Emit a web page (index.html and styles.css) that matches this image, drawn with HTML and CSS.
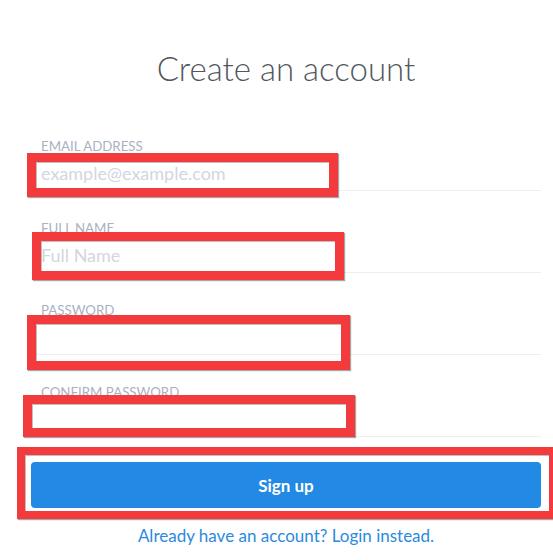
FILE: index.html
```html
<!DOCTYPE html>
<html lang="en">
<head>
<meta charset="utf-8">
<title>Create an account</title>
<link rel="stylesheet" href="styles.css">
</head>
<body>
<main class="page">
  <h1 class="title">Create an account</h1>
  <form class="form">
    <div class="group">
      <label class="label">Email Address</label>
      <input class="input" type="email" placeholder="example@example.com">
    </div>
    <div class="group">
      <label class="label">Full Name</label>
      <input class="input" type="text" placeholder="Full Name">
    </div>
    <div class="group">
      <label class="label">Password</label>
      <input class="input" type="password">
    </div>
    <div class="group">
      <label class="label">Confirm Password</label>
      <input class="input" type="password">
    </div>
    <button class="btn" type="button">Sign up</button>
    <p class="alt"><a class="link" href="#">Already have an account? Login instead.</a></p>
  </form>
</main>
<div class="marks">
  <div class="mark mark-email"></div>
  <div class="mark mark-name"></div>
  <div class="mark mark-pass"></div>
  <div class="mark mark-confirm"></div>
  <div class="mark mark-btn"></div>
</div>
</body>
</html>
```

FILE: styles.css
```css
html, body {
  margin: 0;
  padding: 0;
  background: #ffffff;
  overflow: hidden;
}
body {
  position: relative;
  width: 553px;
  height: 560px;
  font-family: Lato, "Liberation Sans", sans-serif;
}
.page {
  margin-left: 31px;
  width: 510px;
}
.title {
  margin: 0;
  padding-top: 46px;
  height: 44px;
  line-height: 44px;
  font-size: 33px;
  font-weight: 300;
  color: #52575e;
  text-align: center;
}
.form {
  margin: 0;
  padding-top: 47px;
  display: flex;
  flex-direction: column;
}
.group {
  display: flex;
  flex-direction: column;
  margin-bottom: 28px;
}
.label {
  padding-left: 10px;
  height: 18px;
  line-height: 18px;
  font-size: 13.3px;
  color: #a9b1bf;
  text-transform: uppercase;
}
.input {
  box-sizing: border-box;
  height: 36px;
  margin: 0;
  padding: 0 10px;
  border: 0;
  border-bottom: 1px solid #efefef;
  outline: none;
  font-family: Lato, "Liberation Sans", sans-serif;
  font-size: 18px;
  color: #333;
  background: transparent;
}
.input::placeholder {
  color: #d2d6df;
}
.btn {
  margin-top: -3px;
  height: 46px;
  border: 0;
  border-radius: 4px;
  background: #228ae4;
  color: #ffffff;
  font-family: Lato, "Liberation Sans", sans-serif;
  font-weight: 700;
  font-size: 17px;
}
.alt {
  margin: 18px 0 0;
  text-align: center;
  font-size: 17px;
  line-height: 20px;
}
.link {
  color: #2b8ae0;
  text-decoration: none;
}
.marks {
  position: absolute;
  left: 0;
  top: 0;
  width: 553px;
  height: 560px;
  pointer-events: none;
}
.mark {
  position: absolute;
  box-sizing: border-box;
  border: 9px solid #f33b3e;
  box-shadow: 1px 1px 1px rgba(0, 0, 0, 0.35), inset 1px 1px 0 rgba(0, 0, 0, 0.25);
}
.mark-email {
  left: 27px;
  top: 153px;
  width: 311px;
  height: 44px;
}
.mark-name {
  left: 32px;
  top: 232px;
  width: 312px;
  height: 48px;
}
.mark-pass {
  left: 27px;
  top: 315px;
  width: 323px;
  height: 55px;
}
.mark-confirm {
  left: 23px;
  top: 395px;
  width: 332px;
  height: 42px;
}
.mark-btn {
  left: 17px;
  top: 447px;
  width: 540px;
  height: 72px;
  border-width: 8px;
}
```
